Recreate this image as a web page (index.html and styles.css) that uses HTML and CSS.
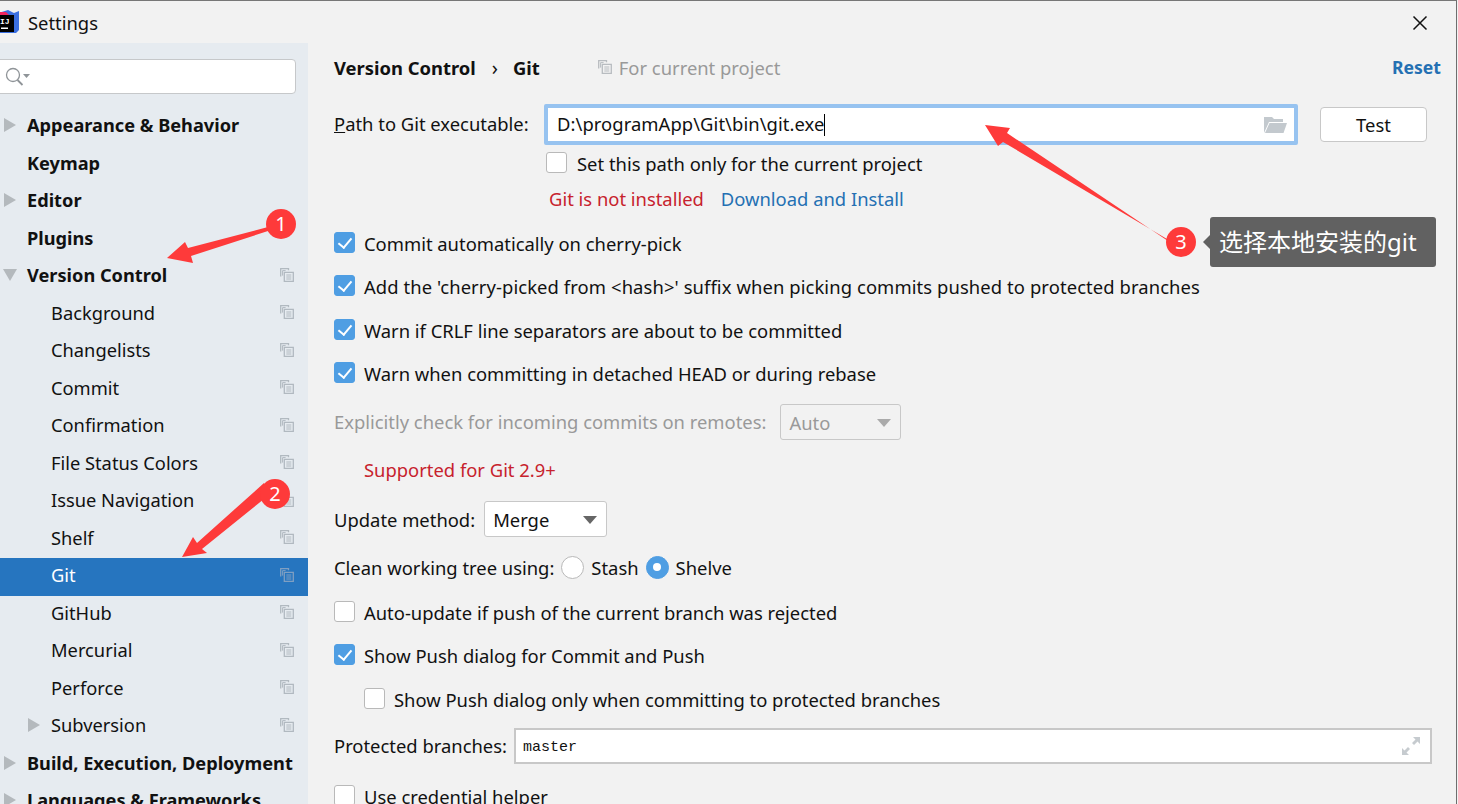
FILE: index.html
```html
<!DOCTYPE html>
<html lang="en">
<head>
<meta charset="utf-8">
<title>Settings</title>
<link rel="stylesheet" href="styles.css">
</head>
<body>
<svg width="0" height="0" class="defs">
  <symbol id="copy" viewBox="0 0 14 14">
    <path d="M.7 8.500V.7h7.800v1.600M4.300 4.300h9v9h-9z" fill="none" stroke="currentColor" stroke-width="1.300"/>
    <path d="M2.600 2.600h3M2.600 2.600v5M6.300 7h5M6.300 9h5M6.300 11h5" fill="none" stroke="currentColor" stroke-width="1"/>
  </symbol>
</svg>
<div class="window">
  <header class="titlebar">
    <svg class="logo" width="19" height="25" viewBox="0 0 19 25">
      <path d="M-2 4 8 1 14 4 19 2v19l-3 3H-2z" fill="#3b6fe0"/>
      <path d="M-2 3h8l3 3-4 8h-7z" fill="#f0245f"/>
      <rect x="-1" y="6" width="15" height="17" fill="#000"/>
      <text x="0" y="15" class="logo-text">IJ</text>
      <rect x="1" y="18.500" width="7" height="1.500" fill="#fff"/>
    </svg>
    <span class="title">Settings</span>
    <svg class="close" width="16" height="16" viewBox="0 0 16 16"><path d="M1.500 1.500l13 13M14.500 1.500l-13 13" stroke="#111" stroke-width="1.500" fill="none"/></svg>
  </header>
  <div class="body">
    <aside class="sidebar">
      <div class="search">
        <svg width="26" height="20" viewBox="0 0 26 20"><circle cx="9" cy="8" r="6.500" fill="none" stroke="#8f9498" stroke-width="1.300"/><path d="M13.500 13l5 5" stroke="#8f9498" stroke-width="1.800"/><path d="M19 7h7l-3.500 4z" fill="#8f9498"/></svg>
      </div>
      <nav class="tree">
        <div class="row top"><i class="tw"></i><span>Appearance &amp; Behavior</span></div>
        <div class="row top"><i class="tw none"></i><span>Keymap</span></div>
        <div class="row top"><i class="tw"></i><span>Editor</span></div>
        <div class="row top"><i class="tw none"></i><span>Plugins</span></div>
        <div class="row top"><i class="tw open"></i><span>Version Control</span><svg class="copy"><use href="#copy"/></svg></div>
        <div class="row sub"><span>Background</span><svg class="copy"><use href="#copy"/></svg></div>
        <div class="row sub"><span>Changelists</span><svg class="copy"><use href="#copy"/></svg></div>
        <div class="row sub"><span>Commit</span><svg class="copy"><use href="#copy"/></svg></div>
        <div class="row sub"><span>Confirmation</span><svg class="copy"><use href="#copy"/></svg></div>
        <div class="row sub"><span>File Status Colors</span><svg class="copy"><use href="#copy"/></svg></div>
        <div class="row sub"><span>Issue Navigation</span><svg class="copy"><use href="#copy"/></svg></div>
        <div class="row sub"><span>Shelf</span><svg class="copy"><use href="#copy"/></svg></div>
        <div class="row sub selected"><span>Git</span><svg class="copy"><use href="#copy"/></svg></div>
        <div class="row sub"><span>GitHub</span><svg class="copy"><use href="#copy"/></svg></div>
        <div class="row sub"><span>Mercurial</span><svg class="copy"><use href="#copy"/></svg></div>
        <div class="row sub"><span>Perforce</span><svg class="copy"><use href="#copy"/></svg></div>
        <div class="row nested"><i class="tw"></i><span>Subversion</span><svg class="copy"><use href="#copy"/></svg></div>
        <div class="row top"><i class="tw"></i><span>Build, Execution, Deployment</span></div>
        <div class="row top"><i class="tw"></i><span>Languages &amp; Frameworks</span></div>
      </nav>
    </aside>
    <main class="content">
      <div class="line head">
        <b>Version Control</b><span class="crumb">›</span><b>Git</b>
        <span class="scope"><svg class="copy"><use href="#copy"/></svg>For current project</span>
        <b class="reset">Reset</b>
      </div>
      <div class="line path mt22">
        <span class="path-label"><u>P</u>ath to Git executable:</span>
        <div class="path-input"><span class="path-value">D:\programApp\Git\bin\git.exe</span><i class="caret"></i>
          <svg class="folder" width="23" height="17" viewBox="0 0 23 17"><path d="M0 17V1h8l2 2h9v3H5z" fill="#c3c9ce"/><path d="M1 17 5.500 7H23l-3.500 10z" fill="#c3c9ce"/></svg>
        </div>
        <div class="btn">Test</div>
      </div>
      <div class="line ind mt3"><i class="cb"></i>Set this path only for the current project</div>
      <div class="line ind2 mt5"><span class="err">Git is not installed</span><span class="link">Download and Install</span></div>
      <div class="line mt15"><i class="cb on"></i>Commit automatically on cherry-pick</div>
      <div class="line mt13 wide"><i class="cb on"></i>Add the 'cherry-picked from &lt;hash&gt;' suffix when picking commits pushed to protected branches</div>
      <div class="line mt14"><i class="cb on"></i>Warn if CRLF line separators are about to be committed</div>
      <div class="line mt13"><i class="cb on"></i>Warn when committing in detached HEAD or during rebase</div>
      <div class="line tall lifted mt16 muted">Explicitly check for incoming commits on remotes:<div class="select off">Auto<i class="dd"></i></div></div>
      <div class="line mt14 note"><span class="err">Supported for Git 2.9+</span></div>
      <div class="line tall mt17">Update method:<div class="select on-white">Merge<i class="dd"></i></div></div>
      <div class="line mt15">Clean working tree using:<i class="radio"></i>Stash<i class="radio sel"></i>Shelve</div>
      <div class="line mt15"><i class="cb"></i>Auto-update if push of the current branch was rejected</div>
      <div class="line mt13"><i class="cb on"></i>Show Push dialog for Commit and Push</div>
      <div class="line mt14 deep"><i class="cb"></i>Show Push dialog only when committing to protected branches</div>
      <div class="line tall lifted mt14">Protected branches:<div class="branches"><span class="mono">master</span>
        <svg class="expand" width="20" height="20" viewBox="0 0 20 20"><path d="M12 1h7v7l-2.500-2.500L13 9 11 7l3.500-3.500zM1 12l2.500 2.500L7 11l2 2-3.500 3.500L8 19H1z" fill="#c6cbcf"/></svg>
      </div></div>
      <div class="line mt17"><i class="cb"></i>Use credential helper</div>
    </main>
  </div>
</div>
<svg class="marks" width="1458" height="804" viewBox="0 0 1458 804">
  <g fill="#fe3a3a">
    <path d="M268 227 188 248 185 242 167 258 193 263 191 256 268 231z"/>
    <circle cx="281" cy="224" r="15"/>
    <path d="M264 483 197 543 193 537 182 557 207 553 202 549 264 499z"/>
    <circle cx="275" cy="494" r="15"/>
    <path d="M1168 241 1007 133 1010 128 985 125 998 146 1003 142 1167 239z"/>
    <circle cx="1181" cy="242" r="15"/>
  </g>
  <g class="num">
    <text x="281" y="231">1</text>
    <text x="275" y="501">2</text>
    <text x="1181" y="249">3</text>
  </g>
</svg>
<div class="tip">选择本地安装的git</div>
</body>
</html>
```

FILE: styles.css
```css
* { box-sizing: border-box; }
html, body { margin: 0; padding: 0; height: 100%; overflow: hidden; }
body {
  width: 1458px; height: 804px; background: #f2f2f2; color: #111;
  font-family: "Noto Sans", "Noto Sans CJK SC", sans-serif; font-size: 18.400px;
  position: relative;
}
.defs { position: absolute; }
.window { height: 804px; width: 1457px; border-top: 1px solid #777; border-right: 1.500px solid #6e6e6e; overflow: hidden; display: flex; flex-direction: column; }
.titlebar { height: 42px; display: flex; align-items: center; flex: none; padding-top: 1px; }
.logo { margin-top: -3px; flex: none; }
.logo-text { font: bold 8px "Liberation Mono", monospace; fill: #fff; }
.title { margin-left: 9px; }
.close { margin: 1px 28px 0 auto; }
.body { flex: 1; display: flex; min-height: 0; }
.sidebar { width: 308px; flex: none; background: #e6ebf0; padding-top: 16px; overflow: hidden; font-size: 18.300px; }
.search { margin-left: -4px; width: 300px; height: 35px; background: #fff; border: 1.500px solid #c6c8ca; border-radius: 4px; display: flex; align-items: center; padding-left: 7px; margin-bottom: 14px; }
.row { height: 37.500px; padding-bottom: 3.600px; display: flex; align-items: center; white-space: nowrap; }
.row.top { padding-left: 4px; padding-bottom: 3px; font-weight: 700; font-size: 18.200px; }
.row.sub { padding-left: 51px; }
.row.nested { padding-left: 28px; }
.row.selected { background: #2675bf; color: #fff; }
.row.selected .copy { color: #7f9fc2; }
.tw { width: 0; height: 0; border-style: solid; border-width: 7px 0 7px 12px; border-color: transparent transparent transparent #b4b9bd; margin-right: 11px; flex: none; }
.tw.none { border-color: transparent; }
.tw.open { border-width: 12px 7px 0 7px; border-color: #b4b9bd transparent transparent transparent; margin-left: -1px; margin-right: 10px; }
.copy { width: 14px; height: 14px; margin-left: auto; margin-right: 14px; color: #b1b9c0; flex: none; }
.content { flex: 1; min-width: 0; padding: 9px 15px 0 26px; }
.line { height: 30px; display: flex; align-items: center; white-space: nowrap; }
.line.tall { height: 36px; }
.line.lifted { padding-bottom: 2px; }
.lifted .select, .lifted .branches { margin-bottom: -2px; }
.mt3 { margin-top: 3px; } .mt5 { margin-top: 5px; } .mt13 { margin-top: 13px; } .mt14 { margin-top: 14px; }
.mt15 { margin-top: 15px; } .mt16 { margin-top: 16px; } .mt17 { margin-top: 17px; } .mt22 { margin-top: 22px; }
.head b { font-weight: 700; }
.crumb { margin: 0 15px 0 16px; font-size: 20px; }
.scope { color: #999; margin-left: 58px; display: flex; align-items: center; }
.scope .copy { margin: 0 7px 0 0; color: #b8bcc0; }
.head .reset { margin-left: auto; color: #2470b3; font-size: 17.600px; }
.wide { letter-spacing: .1px; }
.path { height: 41px; }
.path-label { width: 210px; flex: none; padding-bottom: 2px; }
.path-input { width: 754px; height: 41px; border: 4px solid #97c3f0; border-radius: 2px; background: #fff; display: flex; align-items: center; padding-left: 9px; flex: none; }
.path-value { letter-spacing: .07px; padding-bottom: 2px; }
.caret { width: 1px; height: 22px; background: #000; }
.folder { margin-left: auto; margin-right: 7px; }
.btn { margin-left: 22px; width: 107px; height: 35px; background: #fff; border: 1.500px solid #c8c8c8; border-radius: 4px; display: flex; align-items: center; justify-content: center; }
.ind { padding-left: 213px; }
.ind .cb { margin-left: -1px; margin-right: 10px; }
.ind2 { padding-left: 215px; }
.err { color: #c7222d; }
.link { color: #2470b3; margin-left: 17px; }
.cb { width: 21px; height: 21px; border-radius: 3px; border: 1.500px solid #b9b9b9; background: #fff; margin: 0 9px 2px 0; flex: none; position: relative; }
.cb.on { background: #4f9ee3; border-color: #4f9ee3; }
.cb.on::after { content: ""; position: absolute; left: 6px; top: 2px; width: 6px; height: 11px; border: solid #fff; border-width: 0 2.500px 2.500px 0; transform: rotate(40deg); }
.muted { color: #999; }
.select { height: 36px; display: flex; align-items: center; border: 1.500px solid #c8c8c8; border-radius: 3px; padding-left: 8px; position: relative; }
.select.off { margin-left: 14px; width: 121px; color: #999; }
.select.on-white { margin-left: 9px; width: 123px; background: #fff; }
.dd { position: absolute; right: 9px; top: 14px; width: 0; height: 0; border-style: solid; border-width: 8px 7px 0 7px; border-color: #666 transparent transparent transparent; }
.off .dd { border-top-color: #aaa; }
.note { padding-left: 30px; }
.radio { width: 23px; height: 23px; border-radius: 50%; background: #fff; border: 1.500px solid #b9b9b9; margin: 0 7px; flex: none; position: relative; }
.radio.sel { background: #4f9ee3; border-color: #4f9ee3; }
.radio.sel::after { content: ""; position: absolute; left: 6px; top: 6px; width: 8px; height: 8px; border-radius: 50%; background: #fff; }
.deep { padding-left: 30px; }
.branches { margin-left: 7px; width: 918px; height: 36px; background: #fff; border: 2px solid #c8c8c8; display: flex; align-items: center; padding-left: 7px; }
.mono { font: 15px "Liberation Mono", monospace; padding-top: 2px; }
.expand { margin-left: auto; margin-right: 9px; }
.marks { position: absolute; left: 0; top: 0; pointer-events: none; }
.num text { fill: #fff; font-size: 20px; text-anchor: middle; }
.tip { position: absolute; left: 1210px; top: 217px; width: 226px; height: 50px; background: #616161; border-radius: 3px; color: #fff; font-size: 24px; display: flex; align-items: center; padding: 0 0 3px 9px; }
.tip::before { content: ""; position: absolute; left: -7px; top: 18px; border-style: solid; border-width: 7px 7px 7px 0; border-color: transparent #616161 transparent transparent; }
```
